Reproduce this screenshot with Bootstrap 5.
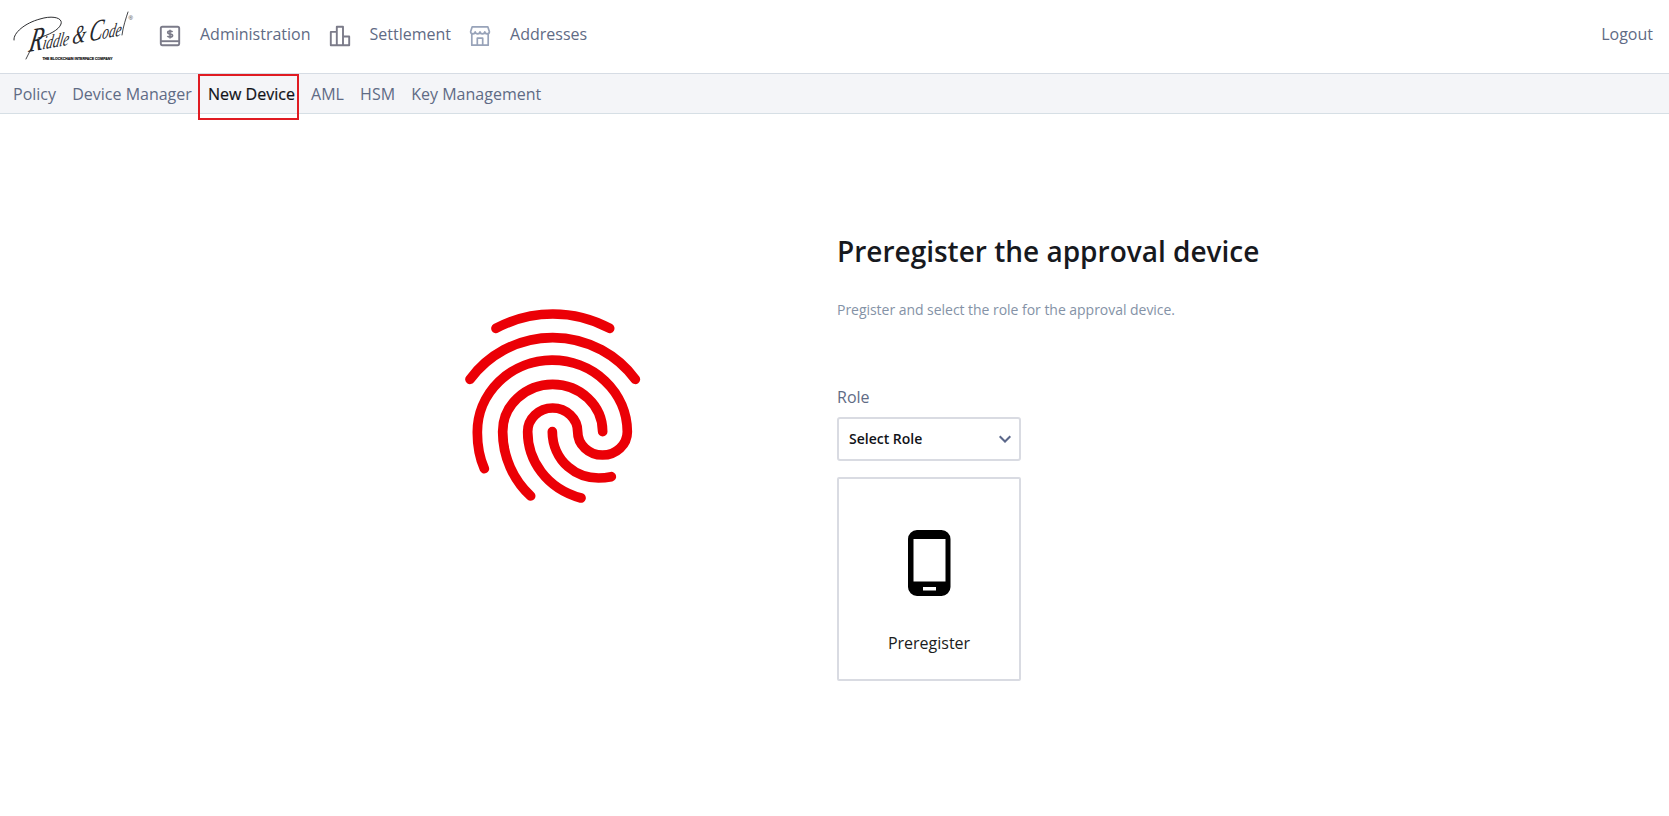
<!DOCTYPE html>
<html lang="en">
<head>
<meta charset="utf-8">
<meta name="viewport" content="width=device-width, initial-scale=1">
<title>New Device</title>
<link href="https://cdn.jsdelivr.net/npm/bootstrap@5.3.0/dist/css/bootstrap.min.css" rel="stylesheet">
<style>
  body { font-family: "Open Sans", sans-serif; font-size: 16px; line-height: 24px; color: #1a1c22; background: #fff; }
  a { text-decoration: none; color: #5f6b85; }
  .topbar { height: 73px; padding: 0 16px 5px 12px; }
  .logo { width: 124px; height: 60px; margin: 3px 22px 0 0; }
  .main-link svg { width: 24px; height: 24px; margin-right: 18px; position: relative; top: 2px; }
  .main-link { margin-right: 17px; }
  .subbar { height: 41px; background: #f4f5f8; border-top: 1px solid #d6dce4; border-bottom: 1px solid #d6dfe5; padding: 0 13px; gap: 16.2px; }
  .subbar .active { color: #111318; -webkit-text-stroke: .2px #111318; }
  .subbar .active::after { content: ""; position: absolute; left: -10px; right: -4px; top: -8px; height: 46px; border: 2px solid #e01b22; }
  .print { width: 220px; height: 230px; margin: 176px 0 0 440px; }
  .panel { margin: 119px 0 0 177px; width: 480px; }
  .panel h1 { font-size: 28px; line-height: 36px; font-weight: 600; margin: 0 0 31px; color: #17191e; white-space: nowrap; }
  .hint { font-size: 14px; line-height: 20px; letter-spacing: -.035px; color: #8492a6; margin: 0 0 65px; }
  .role-label { color: #5f6b85; margin-bottom: 8px; display: block; }
  .role-select { width: 184px; height: 44px; border: 2px solid #d9dbe2; border-radius: 3px; padding: 0 8px 0 10px; font-size: 14px; font-weight: 600; background: #fff; color: #111318; }
  .tile { width: 184px; height: 204px; margin-top: 16px; border: 2px solid #d9dbe2; border-radius: 2px; background: #fff; color: #1a1c20; padding: 51px 0 0; }
  .tile svg { width: 44px; height: 66px; margin-bottom: 35px; }
</style>
</head>
<body>
<header class="topbar d-flex align-items-center">
  <a href="#" class="logo d-block flex-shrink-0" aria-label="Riddle &amp; Code">
    <svg class="d-block overflow-visible" width="124" height="60" viewBox="12 6 124 60">
      <g fill="none" stroke="#15161a" stroke-linecap="round">
        <path stroke-width=".9" d="M14 40C13 33 25 23 40 19C53 15 63 18 61 24C59 30 49 35 38 38"/>
        <path stroke-width=".8" d="M122 35C123 27 126 18 128 12M31 49L26 59"/>
      </g>
      <text transform="translate(28 52) rotate(-10) skewX(-20)" font-family="Liberation Serif, serif" font-style="italic" font-size="19" textLength="94" lengthAdjust="spacingAndGlyphs" fill="#25262a"><tspan font-size="33">R</tspan>iddle <tspan font-size="25">&amp;</tspan> <tspan font-size="29">C</tspan>ode</text>
      <text x="128.500" y="20" font-family="Liberation Sans, sans-serif" font-size="6" fill="#333">®</text>
      <text x="42.500" y="60.200" font-family="Liberation Sans, sans-serif" font-weight="700" font-size="4.400" textLength="70" lengthAdjust="spacingAndGlyphs" fill="#111" stroke="#111" stroke-width=".2">THE BLOCKCHAIN INTERFACE COMPANY</text>
    </svg>
  </a>
  <nav class="d-flex align-items-center flex-grow-1">
    <a href="#" class="main-link d-flex align-items-center">
      <svg viewBox="0 0 24 24" fill="none" stroke="#7b7b89" stroke-width="1.900"><rect x="2.800" y="2.800" width="18.400" height="18.400" rx="1.600"/><path d="M3 17.200h18"/><path stroke-width="1.600" d="M14.500 8c-.5-.7-1.300-.9-2.400-.9-1.400 0-2.400.5-2.400 1.500 0 2.200 4.900.8 4.900 3 0 1-1 1.600-2.500 1.600-1.200 0-2.100-.3-2.700-1.100M12 5.700v8.800"/></svg>
      <span>Administration</span></a>
    <a href="#" class="main-link d-flex align-items-center">
      <svg viewBox="0 0 24 24" fill="none" stroke="#7b7b89" stroke-width="1.900" stroke-linejoin="round"><path d="M2.800 21.200V7.900h6v13.300zM8.800 21.200V2.800h6.200v18.400zM15 21.200v-8.700h6.200v8.700z"/></svg>
      <span>Settlement</span></a>
    <a href="#" class="main-link d-flex align-items-center">
      <svg viewBox="0 0 24 24" fill="none" stroke="#98a3b9" stroke-width="1.700" stroke-linejoin="round"><path d="M4.200 2.800h15.600l1.600 5c0 1.200-1 2-2.300 2-1.200 0-2.300-.8-2.300-2 0 1.200-1.200 2-2.400 2-1.300 0-2.400-.8-2.400-2 0 1.200-1.100 2-2.400 2-1.200 0-2.400-.8-2.400-2 0 1.200-1.100 2-2.300 2-1.300 0-2.300-.8-2.300-2zM3.800 9.800v11.400h16.400V9.800M9.300 21.200v-7h5.400v7"/></svg>
      <span>Addresses</span></a>
  </nav>
  <a href="#">Logout</a>
</header>
<nav class="subbar d-flex align-items-center">
  <a href="#">Policy</a>
  <a href="#">Device Manager</a>
  <a href="#" class="active position-relative">New Device</a>
  <a href="#">AML</a>
  <a href="#">HSM</a>
  <a href="#">Key Management</a>
</nav>
<main class="d-flex align-items-start">
  <svg class="print flex-shrink-0" viewBox="0 0 660 690" fill="none" stroke="#eb0006" stroke-width="29" stroke-linecap="round" stroke-linejoin="round">
    <path d="M168 115A359 359 0 0 1 509 115"/>
    <path d="M90 268A308 308 0 0 1 586 268"/>
    <path d="M133 536C117 499 112 465 112 428A225 216 0 0 1 562 425A74.500 70 0 0 1 413 425A75 71 0 0 0 263 425C263 510 318 595 423 624"/>
    <path d="M488 425A150 142 0 0 0 188 425C188 500 220 570 272 618"/>
    <path d="M337 425C337 505 405 582 514 560"/>
  </svg>
  <section class="panel">
    <h1>Preregister the approval device</h1>
    <p class="hint">Pregister and select the role for the approval device.</p>
    <label class="role-label">Role</label>
    <button class="role-select d-flex align-items-center justify-content-between" type="button">
      <span>Select Role</span>
      <svg width="12" height="8" viewBox="0 0 12 8" fill="none" stroke="#5b678a" stroke-width="2"><path d="M.7 1.200L6 6.500l5.300-5.300"/></svg>
    </button>
    <button class="tile d-flex flex-column align-items-center" type="button">
      <svg viewBox="-1 0 44 66"><path fill="#000" fill-rule="evenodd" d="M9 0h24.500a9 9 0 0 1 9 9v48a9 9 0 0 1-9 9H9a9 9 0 0 1-9-9V9a9 9 0 0 1 9-9zM5.500 9v42.500h32V9zM15 57v3.500h13V57z"/></svg>
      <span>Preregister</span>
    </button>
  </section>
</main>
<script src="https://cdn.jsdelivr.net/npm/bootstrap@5.3.0/dist/js/bootstrap.bundle.min.js"></script>
</body>
</html>
